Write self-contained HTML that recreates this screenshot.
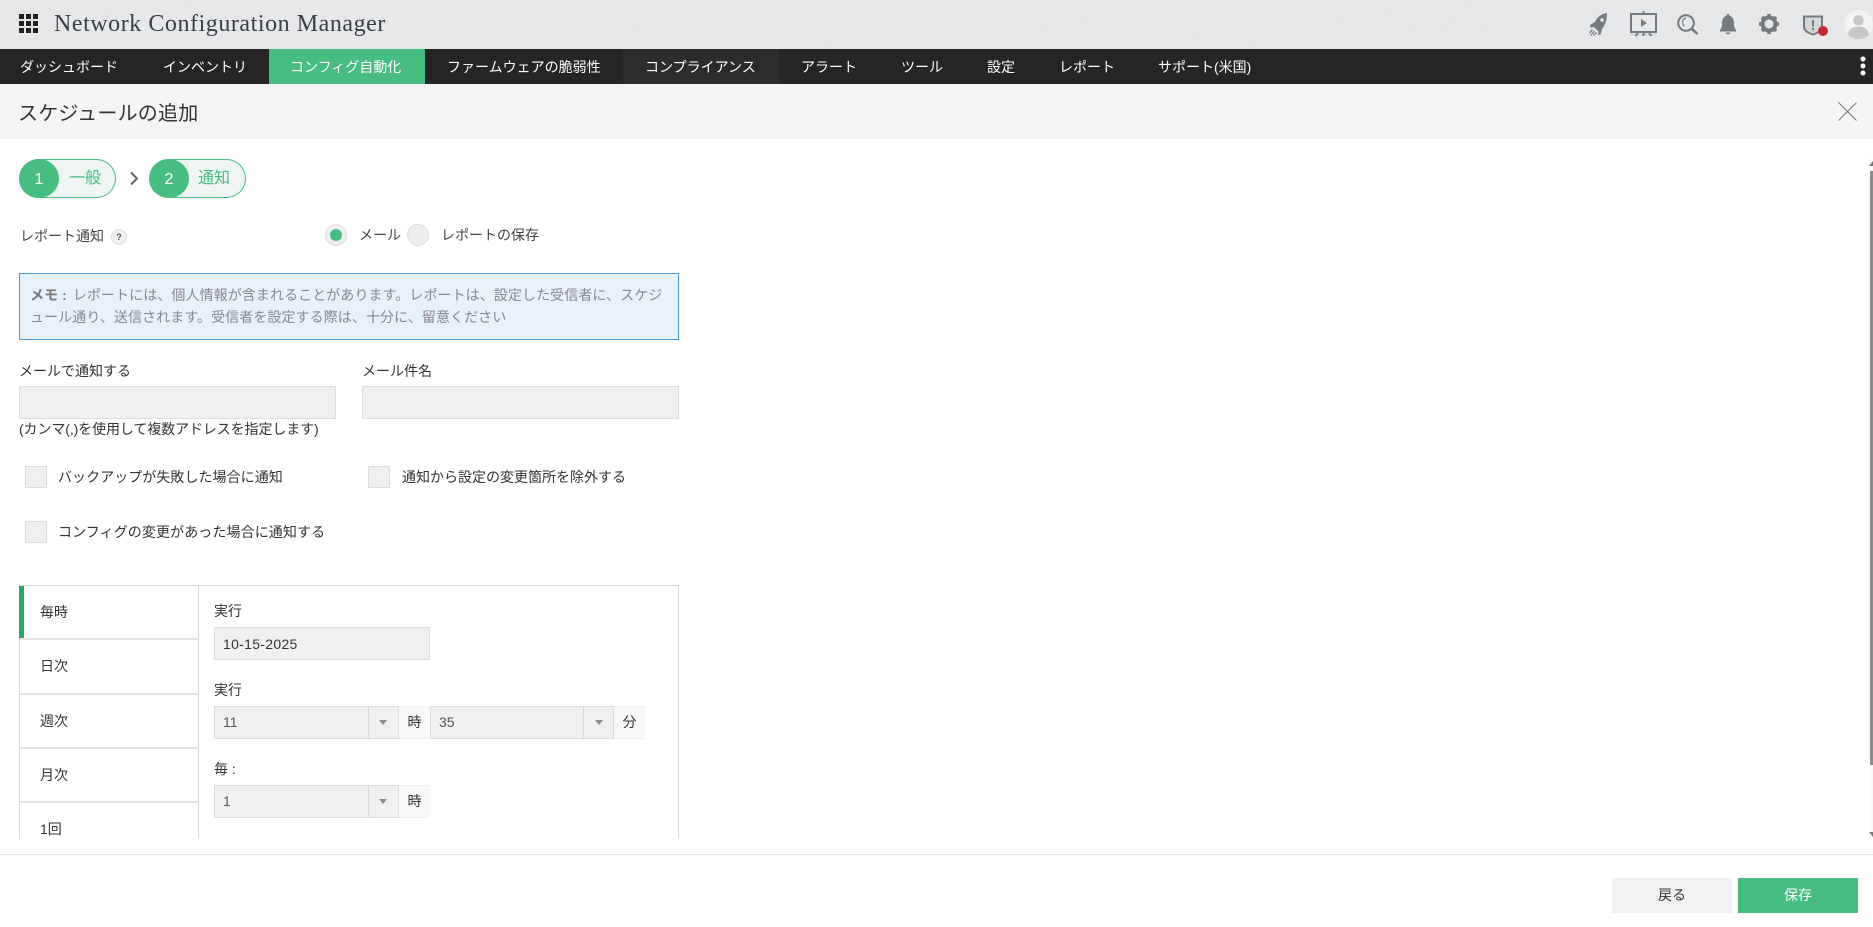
<!DOCTYPE html>
<html lang="ja">
<head>
<meta charset="utf-8">
<title>Network Configuration Manager</title>
<style>
html,body{margin:0;padding:0;width:1873px;height:927px;overflow:hidden;background:#fff}
body{font-family:"Liberation Sans","Noto Sans CJK JP",sans-serif;font-size:14px;color:#333;position:relative}
.a{position:absolute;box-sizing:border-box}
.t{position:absolute;white-space:nowrap;line-height:20px;font-size:14px}
.nav{color:#fff}
.inp{position:absolute;box-sizing:border-box;background:#f0f0f0;border:1px solid #ddd}
.cb{position:absolute;box-sizing:border-box;width:22px;height:22px;background:#f0f0f0;border:1px solid #ddd}
.sep{position:absolute;left:20px;width:178px;height:2px;background:#e4e4e4}
.addon{position:absolute;box-sizing:border-box;background:#f8f8fb;border-top:1px solid #f0f0f0;border-bottom:1px solid #f0f0f0;text-align:center;line-height:31px;color:#333}
.arr{position:absolute;width:0;height:0;border-left:4px solid transparent;border-right:4px solid transparent;border-top:5px solid #8a8a8a}
.vl{position:absolute;width:1px;background:#d8d8d8}
</style>
</head>
<body>
<!-- header -->
<div class="a" style="left:0;top:0;width:1873px;height:49px;background:#e8e9eb"></div>
<svg class="a" style="left:0;top:0" width="1873" height="49"><filter id="n" x="0" y="0" width="100%" height="100%"><feTurbulence type="fractalNoise" baseFrequency=".6" numOctaves="2"/><feColorMatrix values="0 0 0 0 .5  0 0 0 0 .5  0 0 0 0 .5  0 0 0 .08 0"/></filter><rect width="1873" height="49" filter="url(#n)"/></svg>
<svg class="a" style="left:19px;top:14px" width="20" height="20" viewBox="0 0 20 20"><g fill="#1f1f1f"><rect x="0" y="0" width="5" height="5"/><rect x="7" y="0" width="5" height="5"/><rect x="14" y="0" width="5" height="5"/><rect x="0" y="7" width="5" height="5"/><rect x="7" y="7" width="5" height="5"/><rect x="14" y="7" width="5" height="5"/><rect x="0" y="14" width="5" height="5"/><rect x="7" y="14" width="5" height="5"/><rect x="14" y="14" width="5" height="5"/></g></svg>
<div class="t" style="left:54px;top:11px;font-family:'Liberation Serif',serif;font-size:24px;line-height:26px;color:#3a3f45;letter-spacing:.55px">Network Configuration Manager</div>

<!-- header icons -->
<svg class="a" style="left:1585px;top:8px" width="280" height="32" viewBox="1585 8 280 32">
  <!-- rocket -->
  <g fill="#757a7e">
    <path d="M1607 13C1601 14 1597 17 1595 22L1590 25L1590.500 27.500L1594 27L1598.500 31.500L1598 35L1600.500 34.500L1602 29C1605 25 1607 20 1607 13z"/>
  </g>
  <g stroke="#757a7e" stroke-width="1.300" fill="none">
    <path d="M1592.500 29.500L1589.500 33M1594.500 31L1590.500 35.500M1596.500 32.500L1593.500 35.500"/>
  </g>
  <circle cx="1602" cy="20" r="1.800" fill="#e5e6e8"/>
  <!-- presentation -->
  <g fill="none" stroke="#757a7e" stroke-width="2">
    <rect x="1631" y="14" width="25" height="18"/>
    <path d="M1643.500 11v3M1643.500 32v4M1638 33l-2.500 3M1649 33l2.500 3"/>
  </g>
  <rect x="1630" y="33" width="27" height="3" fill="#757a7e" opacity=".12"/>
  <path d="M1641 19v8l6-4z" fill="#757a7e"/>
  <!-- search -->
  <g fill="none" stroke="#757a7e">
    <circle cx="1686" cy="23" r="7.800" stroke-width="2"/>
    <path d="M1692 29l5.500 5" stroke-width="2.600"/>
    <path d="M1686 18c-3.500.6-4.500 5.500-1.500 8.500" stroke-width="1.200"/>
  </g>
  <!-- bell -->
  <path fill="#757a7e" d="M1728 14c1 0 1.700.8 1.700 1.800 2.800 1 4.200 3.500 4.200 6.700 0 3.500.6 6 2.100 7.500v1.500h-16V30c1.500-1.500 2.100-4 2.100-7.500 0-3.200 1.400-5.700 4.200-6.700 0-1 .7-1.800 1.700-1.800zM1725.500 32.500h5c0 1-1.100 1.700-2.500 1.700s-2.500-.7-2.500-1.700z"/>
  <!-- gear -->
  <circle cx="1769" cy="24" r="6.500" fill="none" stroke="#757a7e" stroke-width="4"/>
  <g stroke="#757a7e" stroke-width="3.600">
    <path d="M1769 14v4M1769 30v4M1759 24h4M1775 24h4M1762 17l2.800 2.800M1773.200 28.200l2.800 2.800M1762 31l2.800-2.800M1773.200 19.800l2.800-2.800"/>
  </g>
  <!-- shield -->
  <path d="M1804 16.500h18v10c0 4-4 6.500-9 8-5-1.500-9-4-9-8z" fill="#d4d5d7" stroke="#757a7e" stroke-width="2"/>
  <path d="M1813 20v6.500" stroke="#757a7e" stroke-width="2"/>
  <circle cx="1813" cy="29" r="1.200" fill="#757a7e"/>
  <circle cx="1823" cy="31" r="5" fill="#c6262e"/>
</svg>
<svg class="a" style="left:1844px;top:10px" width="29" height="29" viewBox="0 0 28 28">
  <circle cx="14" cy="14" r="14" fill="#f3f3f3"/>
  <circle cx="14" cy="10" r="5" fill="#c6c6c6"/>
  <path d="M4 24c0-5 4-8 10-8s10 3 10 8c-2.500 2.500-6 4-10 4s-7.500-1.500-10-4z" fill="#c6c6c6"/>
</svg>

<!-- nav -->
<div class="a" style="left:0;top:49px;width:1873px;height:35px;background:#252525"></div>
<div class="a" style="left:623px;top:49px;width:156px;height:35px;background:#2c2c2c"></div>
<div class="a" style="left:269px;top:49px;width:156px;height:35px;background:#47bd81"></div>
<div class="t nav" style="left:20px;top:57px">ダッシュボード</div>
<div class="t nav" style="left:163px;top:57px">インベントリ</div>
<div class="t nav" style="left:290px;top:57px">コンフィグ自動化</div>
<div class="t nav" style="left:447px;top:57px">ファームウェアの脆弱性</div>
<div class="t nav" style="left:645px;top:57px">コンプライアンス</div>
<div class="t nav" style="left:801px;top:57px">アラート</div>
<div class="t nav" style="left:901px;top:57px">ツール</div>
<div class="t nav" style="left:987px;top:57px">設定</div>
<div class="t nav" style="left:1059px;top:57px">レポート</div>
<div class="t nav" style="left:1158px;top:57px">サポート(米国)</div>
<svg class="a" style="left:1859px;top:55px" width="9" height="23"><g fill="#fff"><circle cx="4" cy="4" r="2.500"/><circle cx="4" cy="11" r="2.500"/><circle cx="4" cy="18" r="2.500"/></g></svg>

<!-- title bar -->
<div class="a" style="left:0;top:84px;width:1873px;height:55px;background:#f4f4f4"></div>
<div class="t" style="left:18px;top:101px;font-size:20px;line-height:26px;color:#333;letter-spacing:.2px">スケジュールの追加</div>
<svg class="a" style="left:1837px;top:101px" width="21" height="21"><path d="M1.500 1.500l18 18M19.500 1.500l-18 18" stroke="#777" stroke-width="1" fill="none"/></svg>

<!-- stepper -->
<div class="a" style="left:19px;top:159px;width:97px;height:39px;background:#eef5f2;border:1px solid #47bd81;border-left:0;border-radius:20px"></div>
<div class="a" style="left:19px;top:159px;width:40px;height:39px;background:#47bd81;border-radius:50%"></div>
<div class="t" style="left:19px;top:170px;width:40px;text-align:center;color:#fff;font-size:16px">1</div>
<div class="t" style="left:69px;top:169px;color:#47bd81;font-size:16px">一般</div>
<svg class="a" style="left:129px;top:171px" width="11" height="15"><path d="M2 1.500l6 6-6 6" fill="none" stroke="#666" stroke-width="2"/></svg>
<div class="a" style="left:149px;top:159px;width:97px;height:39px;background:#eef5f2;border:1px solid #47bd81;border-left:0;border-radius:20px"></div>
<div class="a" style="left:149px;top:159px;width:40px;height:39px;background:#47bd81;border-radius:50%"></div>
<div class="t" style="left:149px;top:170px;width:40px;text-align:center;color:#fff;font-size:16px">2</div>
<div class="t" style="left:198px;top:169px;color:#47bd81;font-size:16px">通知</div>

<!-- report notification -->
<div class="t" style="left:20px;top:226px;color:#444">レポート通知</div>
<div class="a" style="left:111px;top:229px;width:16px;height:16px;border-radius:50%;background:#eee;border:1px solid #ddd;text-align:center;font-size:9px;line-height:14px;font-weight:bold;color:#555">?</div>
<div class="a" style="left:325px;top:224px;width:22px;height:22px;border-radius:50%;background:#eee;border:1px solid #ddd"></div>
<div class="a" style="left:330px;top:229px;width:12px;height:12px;border-radius:50%;background:#47bd81"></div>
<div class="t" style="left:359px;top:225px;color:#444">メール</div>
<div class="a" style="left:407px;top:224px;width:22px;height:22px;border-radius:50%;background:#eee;border:1px solid #ddd"></div>
<div class="t" style="left:441px;top:225px;color:#444">レポートの保存</div>

<!-- note -->
<div class="a" style="left:19px;top:273px;width:660px;height:67px;background:#e6f1fa;border:1px solid #4a9ad9"></div>
<div class="t" style="left:30px;top:284px;color:#888;line-height:22px;white-space:nowrap;letter-spacing:.08px"><b style="color:#777;margin-right:2px">メモ : </b>レポートには、個人情報が含まれることがあります。レポートは、設定した受信者に、スケジ<br>ュール通り、送信されます。受信者を設定する際は、十分に、留意ください</div>

<!-- mail fields -->
<div class="t" style="left:19px;top:361px">メールで通知する</div>
<div class="t" style="left:362px;top:361px">メール件名</div>
<div class="inp" style="left:19px;top:386px;width:317px;height:33px"></div>
<div class="inp" style="left:362px;top:386px;width:317px;height:33px"></div>
<div class="t" style="left:19px;top:419px;letter-spacing:-.1px">(カンマ(,)を使用して複数アドレスを指定します)</div>

<!-- checkboxes -->
<div class="cb" style="left:25px;top:466px"></div>
<div class="t" style="left:58px;top:467px;letter-spacing:.05px">バックアップが失敗した場合に通知</div>
<div class="cb" style="left:368px;top:466px"></div>
<div class="t" style="left:402px;top:467px">通知から設定の変更箇所を除外する</div>
<div class="cb" style="left:25px;top:521px"></div>
<div class="t" style="left:58px;top:522px;letter-spacing:.1px">コンフィグの変更があった場合に通知する</div>

<!-- schedule panel -->
<div class="a" style="left:19px;top:585px;width:660px;height:254px;border:1px solid #d8d8d8;border-bottom:0"></div>
<div class="vl" style="left:198px;top:585px;height:254px"></div>
<div class="a" style="left:19px;top:586px;width:5px;height:52px;background:#2aa866"></div>
<div class="sep" style="top:638px"></div>
<div class="sep" style="top:693px"></div>
<div class="sep" style="top:747px"></div>
<div class="sep" style="top:801px"></div>
<div class="t" style="left:40px;top:602px">毎時</div>
<div class="t" style="left:40px;top:656px">日次</div>
<div class="t" style="left:40px;top:711px">週次</div>
<div class="t" style="left:40px;top:765px">月次</div>
<div class="t" style="left:40px;top:819px">1回</div>

<div class="t" style="left:214px;top:601px">実行</div>
<div class="inp" style="left:214px;top:627px;width:216px;height:33px"></div>
<div class="t" style="left:223px;top:634px;letter-spacing:.3px">10-15-2025</div>

<div class="t" style="left:214px;top:680px">実行</div>
<div class="inp" style="left:214px;top:706px;width:185px;height:33px"></div>
<div class="vl" style="left:368px;top:706px;height:33px"></div>
<div class="arr" style="left:379px;top:720px"></div>
<div class="t" style="left:223px;top:712px;color:#555">11</div>
<div class="addon" style="left:399px;top:706px;width:31px;height:33px">時</div>
<div class="inp" style="left:430px;top:706px;width:184px;height:33px"></div>
<div class="vl" style="left:583px;top:706px;height:33px"></div>
<div class="arr" style="left:595px;top:720px"></div>
<div class="t" style="left:439px;top:712px;color:#555">35</div>
<div class="addon" style="left:614px;top:706px;width:31px;height:33px">分</div>

<div class="t" style="left:214px;top:759px">毎 :</div>
<div class="inp" style="left:214px;top:785px;width:185px;height:33px"></div>
<div class="vl" style="left:368px;top:785px;height:33px"></div>
<div class="arr" style="left:379px;top:799px"></div>
<div class="t" style="left:223px;top:791px;color:#555">1</div>
<div class="addon" style="left:399px;top:785px;width:31px;height:33px">時</div>

<!-- scrollbar -->
<div class="a" style="left:1869px;top:159px;width:4px;height:679px;background:#fafafa"></div>
<div class="a" style="left:1870px;top:171px;width:3px;height:594px;background:#8c8c8c"></div>
<svg class="a" style="left:1869px;top:160px" width="4" height="7"><path d="M4 1v5H0z" fill="#777"/></svg>
<svg class="a" style="left:1869px;top:831px" width="4" height="7"><path d="M0 1h4v5z" fill="#777"/></svg>

<!-- footer -->
<div class="a" style="left:0;top:854px;width:1873px;height:1px;background:#e3e3e3"></div>
<div class="a" style="left:1612px;top:878px;width:120px;height:35px;background:#f1f1f1;color:#333;text-align:center;line-height:35px">戻る</div>
<div class="a" style="left:1738px;top:878px;width:120px;height:35px;background:#47bd81;color:#fff;text-align:center;line-height:35px">保存</div>
</body>
</html>
